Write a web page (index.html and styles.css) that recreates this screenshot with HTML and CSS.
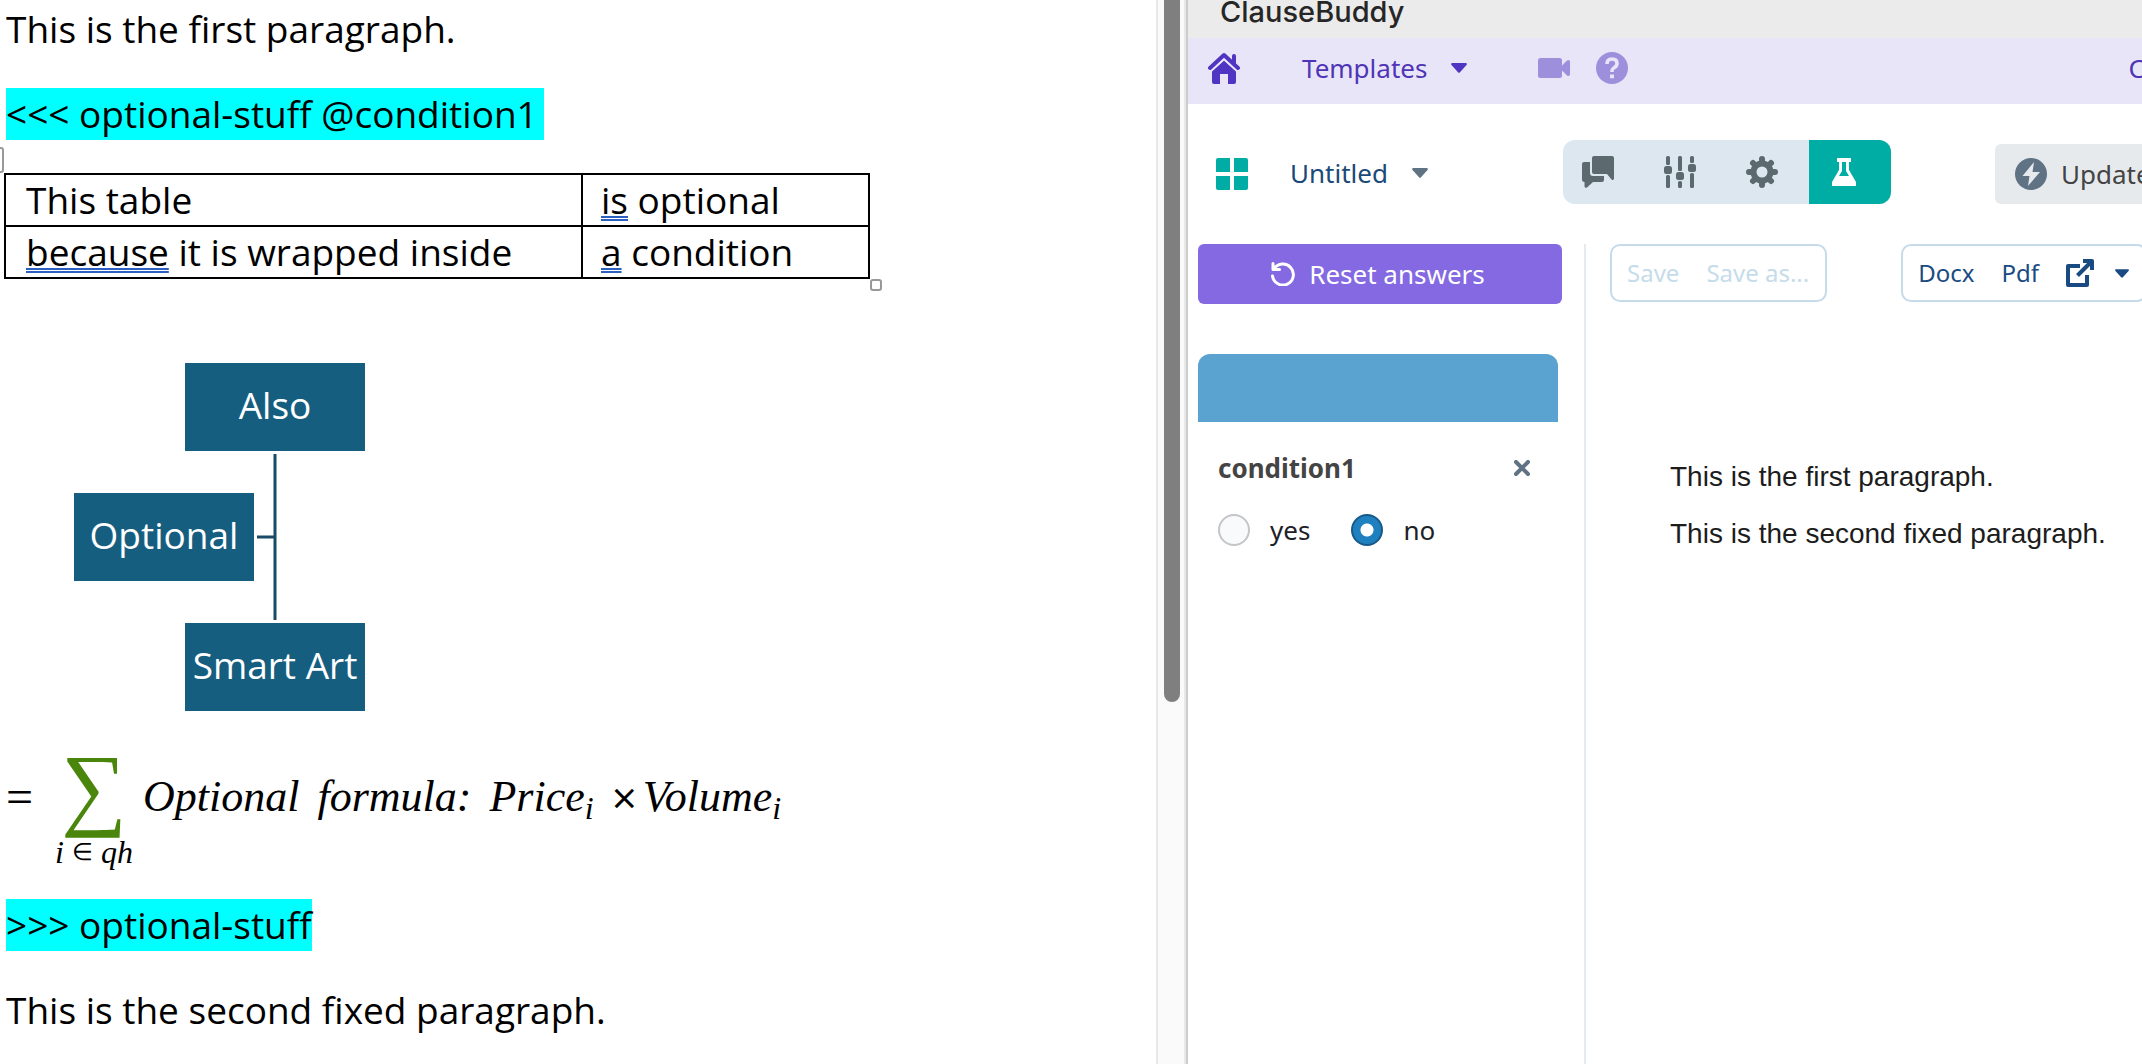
FILE: index.html
```html
<!DOCTYPE html>
<html lang="en">
<head>
<meta charset="utf-8">
<title>ClauseBuddy</title>
<link rel="stylesheet" href="styles.css">
</head>
<body>
<main class="workspace">
  <article class="document">
    <p class="line">This is the first paragraph.</p>
    <p class="line"><mark class="mark mark-open">&lt;&lt;&lt; optional-stuff @condition1</mark></p>
    <div class="table-wrap">
      <span class="move-handle"></span>
      <table class="doc-table">
        <tr><td class="col-wide">This table</td><td><span class="grammar">is</span> optional</td></tr>
        <tr><td class="col-wide"><span class="grammar">because</span> it is wrapped inside</td><td><span class="grammar">a</span> condition</td></tr>
      </table>
      <span class="resize-handle"></span>
    </div>
    <div class="smart-art">
      <svg class="connectors" width="380" height="348" aria-hidden="true">
        <path d="M275 91V257M257 174H275" fill="none" stroke="#1a4b66" stroke-width="3"/>
      </svg>
      <div class="node node-top">Also</div>
      <div class="node node-side">Optional</div>
      <div class="node node-bottom">Smart Art</div>
    </div>
    <div class="formula">
      <span class="equals">=</span>
      <span class="sum"><span class="sigma">∑</span><span class="limit"><i>i</i><span class="element">∈</span><i>qh</i></span></span>
      <span class="words"><i>Optional</i><i>formula:</i><i>Price<sub>i</sub></i><span class="product"><span class="times">×</span><i>Volume<sub>i</sub></i></span></span>
    </div>
    <p class="line"><mark class="mark">&gt;&gt;&gt; optional-stuff</mark></p>
    <p class="line">This is the second fixed paragraph.</p>
  </article>

  <div class="scrollbar"><div class="thumb"></div></div>

  <section class="app">
    <header class="title">ClauseBuddy</header>
    <nav class="nav">
      <a class="home" href="#" aria-label="Home">
        <svg width="32" height="32" viewBox="0 0 32 32"><path d="M16 8.500 28 19V30a2 2 0 0 1-2 2H20V22H12V32H6a2 2 0 0 1-2-2V19Z" fill="#4f35c2"/><path d="M2 16 16 3 30 16M26 11V4" fill="none" stroke="#4f35c2" stroke-width="4" stroke-linecap="round" stroke-linejoin="round"/><path d="M3 19.500 16 7.500 29 19.500" fill="none" stroke="#e8e5f9" stroke-width="1.500"/></svg>
      </a>
      <button class="menu menu-templates">Templates <svg width="16" height="10" viewBox="0 0 16 10"><path d="M1 0H15Q16.500 .5 15.500 2L9 9.300Q8 10.300 7 9.300L.5 2Q-.5 .5 1 0Z" fill="#4f35c2"/></svg></button>
      <a class="video" href="#" aria-label="Video"><svg width="32" height="20" viewBox="0 0 32 20"><rect width="24" height="20" rx="2.500" fill="#9d8fdc"/><path d="M24 7.500 29 2.500Q32 1 32 4V16Q32 19 29 17.500L24 12.500Z" fill="#9d8fdc"/></svg></a>
      <a class="help" href="#" aria-label="Help"><svg width="32" height="32" viewBox="0 0 32 32"><circle cx="16" cy="16" r="16" fill="#9d8fdc"/><path d="M11 12Q11 7 16 7T21 11.500Q21 14 18.500 15.500T16 18.500V20" fill="none" stroke="#e8e5f9" stroke-width="3.600"/><rect x="14" y="22.500" width="4" height="3.800" fill="#e8e5f9"/></svg></a>
      <a class="account" href="#">C</a>
    </nav>
    <div class="toolbar">
      <button class="tiles" aria-label="Dashboard"><svg width="32" height="32" viewBox="0 0 32 32" fill="#00ada4"><path d="M2 0H14V14H0V2Q0 0 2 0ZM18 0H30Q32 0 32 2V14H18ZM0 18H14V32H2Q0 32 0 30ZM18 18H32V30Q32 32 30 32H18Z"/></svg></button>
      <button class="menu menu-file">Untitled <svg width="16" height="10" viewBox="0 0 16 10"><path d="M1 0H15Q16.500 .5 15.500 2L9 9.300Q8 10.300 7 9.300L.5 2Q-.5 .5 1 0Z" fill="#5f7385"/></svg></button>
      <div class="modes">
        <button class="mode" aria-label="Comments"><svg width="32" height="32" viewBox="0 0 32 32" fill="#5c6a70"><path d="M12 0H30Q32 0 32 2V22.500Q31.500 25 29.500 23.500L25 18H12Q10 18 10 16V2Q10 0 12 0Z"/><path d="M2 6H8V17Q8 20 11 20H22V24Q22 26 20 26H11L5 31.500Q3 32.500 2.500 30.500V26Q0 26 0 24V8Q0 6 2 6Z"/></svg></button>
        <button class="mode" aria-label="Parameters"><svg width="32" height="32" viewBox="0 0 32 32" fill="#5c6a70"><rect x="2" width="4" height="9" rx="1.500"/><rect y="10" width="8" height="8" rx="2.500"/><rect x="2" y="19" width="4" height="13" rx="1.500"/><rect x="14" width="4" height="15" rx="1.500"/><rect x="12" y="16" width="8" height="8" rx="2.500"/><rect x="14" y="25" width="4" height="7" rx="1.500"/><rect x="26" width="4" height="7" rx="1.500"/><rect x="24" y="8" width="8" height="8" rx="2.500"/><rect x="26" y="17" width="4" height="15" rx="1.500"/></svg></button>
        <button class="mode" aria-label="Settings"><svg width="32" height="32" viewBox="0 0 32 32"><circle cx="16" cy="16" r="8.500" fill="none" stroke="#5c6a70" stroke-width="6"/><g stroke="#5c6a70" stroke-width="6" stroke-linecap="round"><path d="M16 3V6M16 26V29M3 16H6M26 16H29M7 7 9 9M23 23 25 25M25 7 23 9M9 23 7 25"/></g></svg></button>
        <button class="mode mode-active" aria-label="Test"><svg width="32" height="32" viewBox="0 0 32 32" fill="#fff"><path fill-rule="evenodd" d="M9 2H23V6H21V14L28 26V30H4V26L11 14V6H9ZM14 6V15L11 20H21L18 15V6Z"/></svg></button>
      </div>
      <button class="update"><svg width="32" height="32" viewBox="0 0 32 32"><circle cx="16" cy="16" r="16" fill="#5f7385"/><path d="M19 4 7.500 18H14.500L13 28 25 14H17.500Z" fill="#e6eaed"/></svg>Update</button>
    </div>
    <div class="panes">
      <aside class="questions">
        <button class="reset"><svg width="24" height="24" viewBox="0 0 24 24"><path d="M3 7A10.500 10.500 0 1 1 1.500 14M2 1.500V7.500H8.500" fill="none" stroke="#fff" stroke-width="3" stroke-linecap="round" stroke-linejoin="round"/></svg>Reset answers</button>
        <div class="card-head"></div>
        <fieldset class="question">
          <div class="question-head">
            <span class="question-name">condition1</span>
            <button class="clear" aria-label="Clear"><svg width="16" height="16" viewBox="0 0 16 16"><path d="M2 2 14 14M14 2 2 14" stroke="#5f7385" stroke-width="4" stroke-linecap="round"/></svg></button>
          </div>
          <div class="options">
            <label class="option"><input class="radio" type="radio" name="condition1">yes</label>
            <label class="option"><input class="radio" type="radio" name="condition1" checked>no</label>
          </div>
        </fieldset>
      </aside>
      <section class="preview">
        <div class="actions">
          <div class="group group-save"><button class="action" disabled>Save</button><button class="action" disabled>Save as...</button></div>
          <div class="group group-export"><button class="action">Docx</button><button class="action">Pdf</button><button class="action" aria-label="Open"><svg width="28" height="28" viewBox="0 0 28 28" fill="none" stroke="#1a4a82"><path d="M14 7H2V26H21V16" stroke-width="4" stroke-linejoin="round"/><path d="M11.500 16.500 25 3" stroke-width="4"/><path d="M17 2H26V11" stroke-width="4" stroke-linejoin="round"/></svg></button><button class="action action-more" aria-label="More"><svg width="14" height="9" viewBox="0 0 16 10"><path d="M1 0H15Q16.500 .5 15.500 2L9 9.300Q8 10.300 7 9.300L.5 2Q-.5 .5 1 0Z" fill="#1a4a82"/></svg></button></div>
        </div>
        <div class="output">
          <p class="output-line">This is the first paragraph.</p>
          <p class="output-line">This is the second fixed paragraph.</p>
        </div>
      </section>
    </div>
  </section>
</main>
</body>
</html>
```
FILE: styles.css
```css
* { box-sizing: border-box; }
body { margin: 0; background: #fff; }
p { margin: 0; }
svg { display: block; flex: none; }
button { border: 0; padding: 0; background: none; font: inherit; color: inherit; display: flex; align-items: center; flex: none; }
a { text-decoration: none; flex: none; }

.workspace {
  display: grid;
  grid-template-columns: minmax(0, 1156fr) 32px minmax(0, 954fr);
  height: 100vh;
  overflow: hidden;
}

/* Word document */
.document {
  padding: 3px 0 0 6px;
  overflow: hidden;
  font: 37px/52px "Open Sans", "Noto Sans", sans-serif;
  color: #000;
}
.line { margin-bottom: 33px; }
.mark { display: inline-block; background: #0ff; color: #000; }
.mark-open { padding-right: 6px; }
.table-wrap { position: relative; width: 866px; margin: 0 0 84px -2px; }
.doc-table { width: 100%; border-collapse: collapse; line-height: 50px; }
.doc-table td { border: 2px solid #000; padding: 0 20px; }
.doc-table td + td { padding-left: 18px; }
.doc-table .col-wide { width: 577px; }
.grammar { text-decoration: underline double #2b5fc0 2px; text-underline-offset: 2px; text-decoration-skip-ink: none; }
.move-handle { position: absolute; left: -16px; top: -26px; width: 16px; height: 26px; border: 2px solid #999; border-radius: 3px; }
.resize-handle { position: absolute; left: 100%; top: 100%; width: 12px; height: 12px; border: 2px solid #999; border-radius: 3px; }

.smart-art { position: relative; height: 348px; margin-left: -6px; }
.connectors { position: absolute; left: 0; top: 0; }
.node {
  position: absolute;
  width: 180px;
  height: 88px;
  background: #165e80;
  color: #fff;
  line-height: 84px;
  text-align: center;
  white-space: nowrap;
}
.node-top { left: 185px; top: 0; }
.node-side { left: 74px; top: 130px; }
.node-bottom { left: 185px; top: 260px; }

.formula {
  display: flex;
  height: 140px;
  margin: 48px 0 0;
  font: 44px/76px "Liberation Serif", serif;
}
.equals { width: 46px; font-size: 48px; }
.sum { width: 84px; display: flex; flex-direction: column; align-items: center; }
.sigma { font-size: 92px; line-height: 56px; color: #4a850c; }
.limit { display: flex; gap: 8px; margin-top: 15px; font-size: 32px; line-height: 44px; }
.element { font-size: 24px; }
.words { display: flex; gap: 18px; padding-left: 7px; }
.product { display: flex; gap: 6px; }
.times { font-family: "Open Sans", sans-serif; }
.words sub { font-size: 32px; line-height: 0; vertical-align: -8px; }

/* Scrollbar between the windows */
.scrollbar { background: #fafafa; border-left: 2px solid #e8e8e8; border-right: 2px solid #ccc; padding: 0 6px; box-shadow: inset -2px 0 #e8e8e8; }
.thumb { width: 16px; height: 66vh; background: #7f7f7f; border-radius: 0 0 8px 8px; }

/* ClauseBuddy window */
.app {
  display: flex;
  flex-direction: column;
  overflow: hidden;
  font: 26px/36px "Noto Sans", sans-serif;
  white-space: nowrap;
}
.title { height: 38px; padding-left: 32px; background: #ebebeb; color: #262626; font: 500 29px/24px Inter, sans-serif; }
.nav { height: 66px; flex: none; padding: 0 0 6px 20px; display: flex; align-items: center; background: #e8e5f9; color: #4f35b5; overflow: hidden; }
.menu { gap: 24px; }
.menu-templates { margin-left: 62px; }
.video { margin-left: 71px; }
.help { margin-left: 26px; }
.account { margin: 0 -3px 0 auto; color: #4f35b5; }

.toolbar { height: 140px; flex: none; padding: 36px 0 0 28px; display: flex; align-items: flex-start; overflow: hidden; }
.tiles { height: 64px; padding-top: 4px; }
.menu-file { height: 64px; padding-top: 2px; margin-left: 42px; color: #1b4a78; }
.modes { display: flex; flex: none; margin-left: 135px; border-radius: 12px; overflow: hidden; background: #dde7ef; }
.mode { width: 82px; height: 64px; padding-left: 19px; }
.mode-active { background: #00ada4; }
.update { height: 60px; margin: 4px 0 0 104px; padding: 0 20px; gap: 14px; border-radius: 6px; background: #e6eaed; color: #444; }

.panes { flex: 1; display: grid; grid-template-columns: 396px minmax(0, 1fr); }
.questions { padding: 0 22px 0 10px; }
.reset { width: 100%; height: 60px; justify-content: center; gap: 14px; padding-right: 4px; border-radius: 6px; background: #8469e2; color: #fff; }
.card-head { height: 68px; margin: 50px 4px 0 0; border-radius: 12px 12px 0 0; background: #5aa2d0; }
.question { border: 0; margin: 0; padding: 26px 32px 0 20px; }
.question-head { display: flex; align-items: center; justify-content: space-between; height: 40px; }
.question-name { font-weight: 700; color: #444; }
.options { display: flex; gap: 41px; padding-top: 24px; }
.option { display: flex; align-items: center; gap: 20px; color: #1c2127; }
.radio { appearance: none; width: 32px; height: 32px; margin: 0; border: 2px solid #c3c5c8; border-radius: 50%; background: #f9fafb; }
.radio:checked { border-color: #175a89; background: radial-gradient(circle, #fff 6px, #1f80bf 7px); }

.preview { border-left: 2px solid #e5eaef; padding-left: 24px; overflow: hidden; }
.actions { display: flex; gap: 74px; font-size: 24px; }
.group { display: flex; align-items: center; flex: none; height: 58px; padding: 0 16px 0 15px; gap: 27px; border: 2px solid #c5dbe9; border-radius: 10px; color: #1a4a82; }
.action:disabled { color: #c5dcea; }
.action-more { margin-left: -6px; }
.output { padding: 159px 0 0 60px; font: 28px/32px "Liberation Sans", sans-serif; color: #1c1c1c; }
.output-line { margin-bottom: 25px; }
```
